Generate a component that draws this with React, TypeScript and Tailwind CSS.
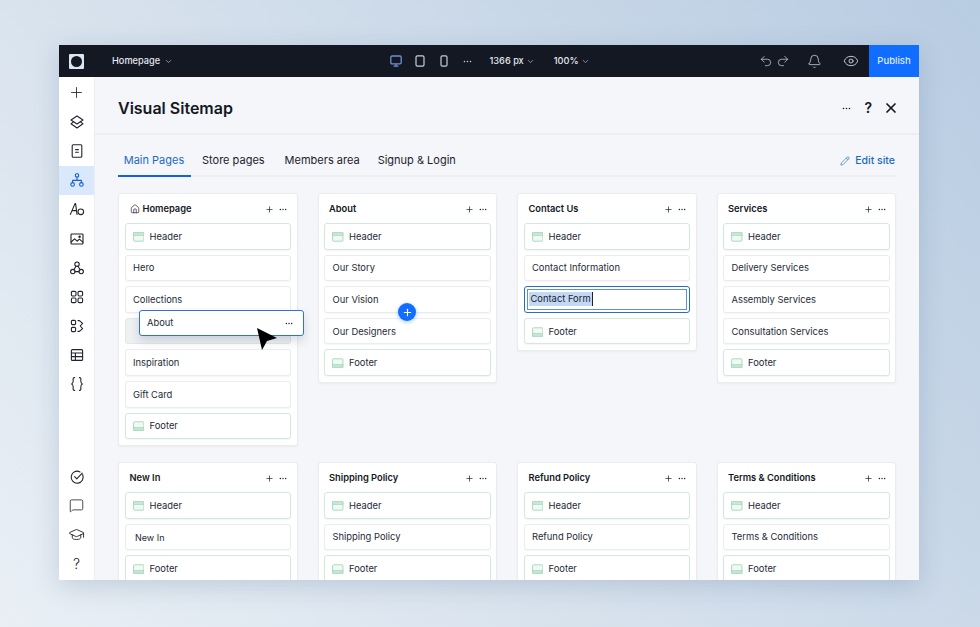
// App.tsx
import React, { ReactNode } from "react";
import {
  Bell,
  ChevronDown,
  Eye,
  GraduationCap,
  Home,
  MessageSquare,
  Pencil,
  Plus,
  Redo2,
  Undo2,
  X,
} from "lucide-react";

type Row = { label: string; kind?: "header" | "footer" | "editing" | "ghost"; inset?: boolean };
type Sitemap = { title: string; home?: boolean; rows: Row[] };

const header: Row = { label: "Header", kind: "header" };
const footer: Row = { label: "Footer", kind: "footer" };

const pages: Sitemap[] = [
  {
    title: "Homepage",
    home: true,
    rows: [
      header,
      { label: "Hero" },
      { label: "Collections" },
      { label: "", kind: "ghost" },
      { label: "Inspiration" },
      { label: "Gift Card" },
      footer,
    ],
  },
  {
    title: "About",
    rows: [header, { label: "Our Story" }, { label: "Our Vision" }, { label: "Our Designers" }, footer],
  },
  {
    title: "Contact Us",
    rows: [header, { label: "Contact Information" }, { label: "Contact Form", kind: "editing" }, footer],
  },
  {
    title: "Services",
    rows: [
      header,
      { label: "Delivery Services" },
      { label: "Assembly Services" },
      { label: "Consultation Services" },
      footer,
    ],
  },
  { title: "New In", rows: [header, { label: "New In", inset: true }, footer] },
  { title: "Shipping Policy", rows: [header, { label: "Shipping Policy" }, footer] },
  { title: "Refund Policy", rows: [header, { label: "Refund Policy" }, footer] },
  { title: "Terms & Conditions", rows: [header, { label: "Terms & Conditions" }, footer] },
];

function Dots({ className }: { className?: string }) {
  return (
    <svg viewBox="0 0 12 4" className={className} fill="currentColor">
      <circle cx="2" cy="2" r="1.05" />
      <circle cx="6" cy="2" r="1.05" />
      <circle cx="10" cy="2" r="1.05" />
    </svg>
  );
}

function Glyph({ children, className = "w-4 h-4" }: { children: ReactNode; className?: string }) {
  return (
    <svg viewBox="0 0 16 16" className={className} fill="none" stroke="currentColor" strokeWidth="1.1" strokeLinejoin="round" strokeLinecap="round">
      {children}
    </svg>
  );
}

const sideTop: ReactNode[] = [
  <Plus key="add" className="w-[17px] h-[17px]" strokeWidth={1.2} />,
  <Glyph key="layers">
    <path d="M8 2 14 6 8 10 2 6Z" />
    <path d="M4.4 7.8 2 9.8 8 14l6-4.2-2.4-2" />
  </Glyph>,
  <Glyph key="page">
    <rect x="3.2" y="1.8" width="9.6" height="12.4" rx="1" />
    <path d="M6.6 6.6h2.8M6.6 9.2h2.8" />
  </Glyph>,
  <Glyph key="map">
    <rect x="6.4" y="1.8" width="3.2" height="3.2" rx="1" />
    <circle cx="3.6" cy="12.4" r="1.8" />
    <circle cx="12.4" cy="12.4" r="1.8" />
    <path d="M8 5v3.4M3.6 10.6V8.4h8.8v2.2" />
  </Glyph>,
  <Glyph key="type">
    <path d="M1.4 13.4 6 2.6h.6l1.4 10.8M3.2 9.6h4.2" />
    <circle cx="11.8" cy="10.8" r="2.8" />
  </Glyph>,
  <Glyph key="media">
    <rect x="2" y="3" width="12" height="10" rx="0.8" />
    <path d="m2.2 11 3.4-3.2 2.6 2.4 2.2-2 3.4 3" />
    <circle cx="10.6" cy="5.8" r="0.7" />
  </Glyph>,
  <Glyph key="apps">
    <circle cx="8" cy="4.2" r="2.2" />
    <circle cx="3.8" cy="11.6" r="2.2" />
    <circle cx="12.2" cy="11.6" r="2.2" />
    <path d="M6.9 6.2 5 9.7M9.1 6.2 11 9.7M6 11.6h4" />
  </Glyph>,
  <Glyph key="grid">
    <rect x="2.4" y="2.4" width="4.6" height="4.6" rx="1.2" />
    <rect x="9" y="2.4" width="4.6" height="4.6" rx="1.2" />
    <rect x="2.4" y="9" width="4.6" height="4.6" rx="1.2" />
    <rect x="9" y="9" width="4.6" height="4.6" rx="1.2" />
  </Glyph>,
  <Glyph key="blocks">
    <rect x="2.4" y="2.4" width="4.2" height="4.2" rx="1" />
    <rect x="2.4" y="9.4" width="4.2" height="4.2" rx="1" />
    <path d="M9 2.6h1.4l3.2 2.8-2.4 2.6 2.4 2.6-3.2 2.8H9" />
  </Glyph>,
  <Glyph key="table">
    <rect x="2.4" y="2.6" width="11.2" height="10.8" rx="1" />
    <path d="M2.4 6h11.2M2.4 9.6h11.2M6.4 6v7.4" />
  </Glyph>,
  <Glyph key="code">
    <path d="M5.6 1.6c-2 0-1.4 1.8-1.4 3.2 0 1.6-.4 2.9-1.6 3.2 1.2.3 1.6 1.6 1.6 3.2s-.6 3.2 1.4 3.2" />
    <path d="M10.4 1.6c2 0 1.4 1.8 1.4 3.2 0 1.6.4 2.9 1.6 3.2-1.2.3-1.6 1.6-1.6 3.2s.6 3.2-1.4 3.2" />
  </Glyph>,
];

const sideBottom: ReactNode[] = [
  <Glyph key="check">
    <path d="M13.6 5.6A6 6 0 1 1 11 2.9" />
    <path d="m5.6 7.6 2.2 2.2 5.4-5.6" />
  </Glyph>,
  <MessageSquare key="chat" className="w-[15px] h-[15px]" strokeWidth={1.3} />,
  <GraduationCap key="learn" className="w-[17px] h-[17px]" strokeWidth={1.3} />,
  <span key="help" className="text-[14px] font-light leading-none">?</span>,
];

function Sidebar() {
  return (
    <aside className="w-[36px] shrink-0 bg-white flex flex-col justify-between items-stretch text-[#20242e] border-r border-[#eceef2] pt-[1px] pb-[2px]">
      <div className="flex flex-col">
        {sideTop.map((icon, i) => (
          <div
            key={i}
            className={
              i === 3
                ? "h-[29.2px] flex items-center justify-center bg-[#d9e8fb] text-[#1a5fc4]"
                : "h-[29.2px] flex items-center justify-center"
            }
          >
            {icon}
          </div>
        ))}
      </div>
      <div className="flex flex-col">
        {sideBottom.map((icon, i) => (
          <div key={i} className="h-[29px] flex items-center justify-center">
            {icon}
          </div>
        ))}
      </div>
    </aside>
  );
}

function TopBar() {
  return (
    <header className="h-[32px] shrink-0 bg-[#131823] text-[#e6e9ef] flex items-center text-[9.2px] font-medium">
      <div className="w-[53px] pl-[10px] shrink-0">
        <div className="w-[15px] h-[15px] bg-[#dbe6f5] rounded-[1px] flex items-center justify-center">
          <div className="w-[11px] h-[11px] rounded-full bg-[#131823]" />
        </div>
      </div>
      <span>Homepage</span>
      <ChevronDown className="w-[9px] h-[9px] ml-[4px] text-[#aab1bd]" />
      <div className="ml-[216px] flex items-center text-[#c9ced8]">
        <svg viewBox="0 0 14 14" className="w-[14px] h-[14px] text-[#6f8fd6]" fill="none" stroke="currentColor" strokeWidth="1.3">
          <rect x="1.8" y="2" width="10.4" height="7.8" rx="1.2" />
          <path d="M4.6 12.2h4.8M7 9.8v2.4" />
        </svg>
        <svg viewBox="0 0 14 14" className="w-[14px] h-[14px] ml-[10px]" fill="none" stroke="currentColor" strokeWidth="1.2">
          <rect x="3" y="1.8" width="8" height="10.4" rx="1.4" />
        </svg>
        <svg viewBox="0 0 14 14" className="w-[14px] h-[14px] ml-[9.5px]" fill="none" stroke="currentColor" strokeWidth="1.2">
          <rect x="4" y="1.8" width="6" height="10.4" rx="1.4" />
        </svg>
        <Dots className="w-[9px] h-[3px] ml-[12px]" />
      </div>
      <span className="ml-[18px]">1366 px</span>
      <ChevronDown className="w-[9px] h-[9px] ml-[2px] text-[#aab1bd]" />
      <span className="ml-[19px]">100%</span>
      <ChevronDown className="w-[9px] h-[9px] ml-[2px] text-[#aab1bd]" />
      <div className="ml-auto flex items-center text-[#d8dce4]">
        <Undo2 className="w-[14px] h-[14px]" strokeWidth={1.2} />
        <Redo2 className="w-[14px] h-[14px] ml-[3px]" strokeWidth={1.2} />
        <Bell className="w-[15px] h-[15px] ml-[17px]" strokeWidth={1.2} />
        <Eye className="w-[16px] h-[16px] ml-[21px]" strokeWidth={1.3} />
      </div>
      <button className="ml-[10px] w-[50px] h-full bg-[#116dff] text-[#dcebff] text-[9.5px] font-medium">Publish</button>
    </header>
  );
}

function PanelHead() {
  return (
    <div className="h-[58px] shrink-0 flex items-center justify-between pt-[6px] pl-[23px] pr-[20px] border-b-2 border-[#eceef2]">
      <h1 className="text-[16px] font-semibold text-[#141823]">Visual Sitemap</h1>
      <div className="flex items-center text-[#141823]">
        <Dots className="w-[11px] h-[3px]" />
        <span className="ml-[12px] text-[14px] font-semibold leading-none">?</span>
        <X className="w-[16px] h-[16px] ml-[11px]" strokeWidth={2.6} />
      </div>
    </div>
  );
}

function Tabs() {
  return (
    <div className="mx-[23px] h-[42px] shrink-0 flex items-stretch border-b-2 border-[#eceef2] text-[11px] text-[#1c2230]">
      <div className="w-[73px] -mb-[2px] pt-[10px] pr-[1px] flex items-center justify-center text-[#1b6ac9] border-b-2 border-[#1264d8]">
        Main Pages
      </div>
      <div className="ml-[11px] pt-[11px] flex items-center">Store pages</div>
      <div className="ml-[20px] pt-[11px] flex items-center">Members area</div>
      <div className="ml-[18px] pt-[11px] flex items-center">Signup &amp; Login</div>
      <div className="ml-auto mr-[1px] pt-[11px] flex items-center text-[#1a6bc2] text-[10.5px] font-medium">
        <Pencil className="w-[10px] h-[10px] mr-[5px]" strokeWidth={1.5} />
        Edit site
      </div>
    </div>
  );
}

function SectionIcon({ kind }: { kind: "header" | "footer" }) {
  return (
    <svg viewBox="0 0 12 10" className="w-[11.5px] h-[10px] text-[#a8d8bf] shrink-0" fill="#f0f9f4" stroke="currentColor" strokeWidth="1">
      <rect x="0.6" y="0.6" width="10.8" height="8.8" rx="1" />
      {kind === "header" ? (
        <rect x="0.6" y="0.6" width="10.8" height="2.6" fill="#d4eddf" />
      ) : (
        <rect x="0.6" y="6.8" width="10.8" height="2.6" fill="#cdeadb" />
      )}
    </svg>
  );
}

function PageRow({ row }: { row: Row }) {
  if (row.kind === "ghost") {
    return <div className="h-[26.6px] rounded-[3px] border border-[#e3e5ea] bg-[#eef0f2]" />;
  }
  if (row.kind === "editing") {
    return (
      <div className="h-[26.6px] rounded-[3px] border-[1.5px] border-[#2a6fbd] p-[2px]">
        <div className="h-full border-[1.5px] border-[#5d94cf] flex items-center pl-[1.5px] text-[9.4px] text-[#1c2230]">
          <span className="bg-[#c3d9f3] border-r border-[#1c2230] px-[1.5px] leading-[14px]">{row.label}</span>
        </div>
      </div>
    );
  }
  if (row.kind) {
    return (
      <div className="h-[26.6px] rounded-[3px] bg-white border-[1.5px] border-[#d3e8df] flex items-center pt-[1px] pl-[7px] text-[9.4px] text-[#252a36] shadow-[0_1px_1px_rgba(30,50,80,0.05)]">
        <SectionIcon kind={row.kind} />
        <span className="ml-[5.5px]">{row.label}</span>
      </div>
    );
  }
  return (
    <div
      className={
        row.inset
          ? "h-[26.6px] rounded-[3px] bg-white border-[1.5px] border-[#eaecf0] flex items-center pt-[1px] pl-[9.5px] text-[9px] text-[#252a36] shadow-[0_1px_1px_rgba(30,50,80,0.05)]"
          : "h-[26.6px] rounded-[3px] bg-white border-[1.5px] border-[#eaecf0] flex items-center pt-[1px] pl-[7.5px] text-[9.4px] text-[#252a36] shadow-[0_1px_1px_rgba(30,50,80,0.05)]"
      }
    >
      {row.label}
    </div>
  );
}

function PageCard({ page }: { page: Sitemap }) {
  return (
    <section className="bg-white rounded-[3px] border-[1.5px] border-[#eaecf0] px-[5.5px] pb-[6px] shadow-[0_1px_2px_rgba(30,50,80,0.05)]">
      <div className="h-[29px] flex items-center justify-between pl-[5px] pr-[4px] text-[#141823]">
        <div className="flex items-center text-[9.3px] font-semibold">
          {page.home && <Home className="w-[10px] h-[10px] mr-[3px]" strokeWidth={1.6} />}
          {page.title}
        </div>
        <div className="flex items-center mt-[2px]">
          <Plus className="w-[9px] h-[9px]" strokeWidth={1.8} />
          <Dots className="w-[8px] h-[3px] ml-[5px]" />
        </div>
      </div>
      <div className="flex flex-col gap-[5px]">
        {page.rows.map((row, i) => (
          <PageRow key={i} row={row} />
        ))}
      </div>
    </section>
  );
}

// floating bits that sit over the board: dragged page, insert button, cursor
function DragOverlay() {
  return (
    <>
      <div className="absolute left-[80px] top-[264.5px] w-[165px] h-[26px] rounded-[3px] bg-white border-[1.5px] border-[#2f74c6] flex items-center justify-between pt-[1px] pl-[7px] pr-[10px] text-[9.4px] text-[#252a36] shadow-[0_5px_10px_rgba(30,50,80,0.16)]">
        About
        <Dots className="w-[8px] h-[3px] text-[#141823]" />
      </div>
      <svg viewBox="0 0 22 24" className="absolute left-[197px] top-[282px] w-[22px] h-[24px] text-black" fill="currentColor">
        <path d="M1 1 21 11 11 14 6 23Z" />
      </svg>
      <div className="absolute left-[339px] top-[258px] w-[18px] h-[18px] rounded-full bg-[#116dff] text-white flex items-center justify-center shadow-[0_1px_4px_rgba(17,109,255,0.4)]">
        <Plus className="w-[11px] h-[11px]" strokeWidth={2.4} />
      </div>
    </>
  );
}

export default function App() {
  return (
    <div className="w-full h-[627px] overflow-hidden pt-[45px] pl-[59px] bg-[linear-gradient(50deg,#e9eff5_0%,#d5e0ec_45%,#b8cce2_100%)] [font-family:Inter,'Noto_Sans',sans-serif]">
      <div className="relative w-[860px] h-[535px] flex flex-col overflow-hidden bg-[#f5f6f9] shadow-[0_6px_24px_rgba(70,100,140,0.22)]">
        <TopBar />
        <div className="flex flex-1 min-h-0">
          <Sidebar />
          <main className="flex-1 min-w-0 flex flex-col overflow-hidden">
            <PanelHead />
            <Tabs />
            <div className="grid grid-cols-4 gap-x-[20px] gap-y-[16px] items-start px-[23px] pt-[16px]">
              {pages.map((page) => (
                <PageCard key={page.title} page={page} />
              ))}
            </div>
          </main>
        </div>
        <DragOverlay />
      </div>
    </div>
  );
}
